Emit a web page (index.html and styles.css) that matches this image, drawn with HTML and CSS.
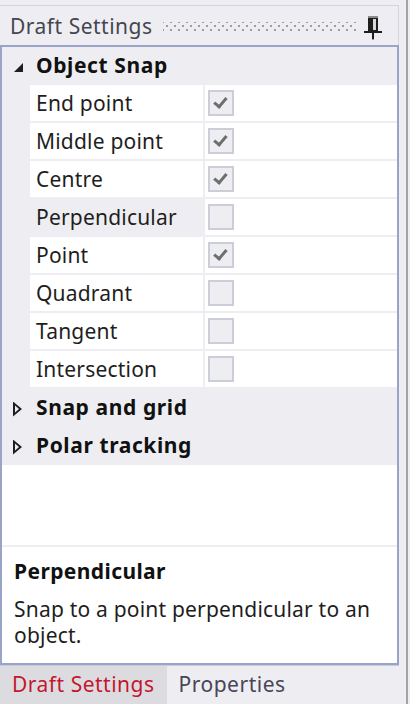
FILE: index.html
```html
<!DOCTYPE html>
<html>
<head>
<meta charset="utf-8">
<link rel="stylesheet" href="styles.css">
</head>
<body>
<div class="frame">
  <div class="panel">
    <div class="header">
      <span class="title">Draft Settings</span>
      <span class="grip"></span>
      <svg class="pin" width="18" height="24" viewBox="0 0 18 24">
        <rect x="4" y="0" width="10" height="2" fill="#8a8a8a"/>
        <rect x="4" y="2" width="10" height="13" fill="#1e1e1e"/>
        <rect x="9" y="3" width="3" height="11" fill="#d8d8dc"/>
        <rect x="0" y="15" width="18" height="2" fill="#1e1e1e"/>
        <rect x="8" y="17" width="2" height="6" fill="#1e1e1e"/>
        <rect x="8" y="23" width="2" height="1" fill="#9a9a9a"/>
      </svg>
    </div>
    <div class="content">
      <div class="grid">
        <div class="category">
          <span class="exp-open"></span>
          <span class="cat-label">Object Snap</span>
        </div>
        <div class="prop">
          <span class="indent"></span><span class="name">End point</span><span class="value"><span class="check on"></span></span>
        </div>
        <div class="prop">
          <span class="indent"></span><span class="name">Middle point</span><span class="value"><span class="check on"></span></span>
        </div>
        <div class="prop">
          <span class="indent"></span><span class="name">Centre</span><span class="value"><span class="check on"></span></span>
        </div>
        <div class="prop selected">
          <span class="indent"></span><span class="name">Perpendicular</span><span class="value"><span class="check"></span></span>
        </div>
        <div class="prop">
          <span class="indent"></span><span class="name">Point</span><span class="value"><span class="check on"></span></span>
        </div>
        <div class="prop">
          <span class="indent"></span><span class="name">Quadrant</span><span class="value"><span class="check"></span></span>
        </div>
        <div class="prop">
          <span class="indent"></span><span class="name">Tangent</span><span class="value"><span class="check"></span></span>
        </div>
        <div class="prop">
          <span class="indent"></span><span class="name">Intersection</span><span class="value"><span class="check"></span></span>
        </div>
        <div class="category">
          <span class="exp-closed"></span>
          <span class="cat-label">Snap and grid</span>
        </div>
        <div class="category">
          <span class="exp-closed"></span>
          <span class="cat-label">Polar tracking</span>
        </div>
        <div class="empty"></div>
      </div>
      <div class="desc">
        <div class="desc-title">Perpendicular</div>
        <div class="desc-text">Snap to a point perpendicular to an object.</div>
      </div>
    </div>
    <div class="tabs">
      <span class="tab active">Draft Settings</span>
      <span class="tab">Properties</span>
    </div>
  </div>
  <div class="edge"></div>
</div>
</body>
</html>
```

FILE: styles.css
```css
html, body {
  margin: 0;
  padding: 0;
  background: #eeeef2;
  width: 410px;
  height: 704px;
  overflow: hidden;
}
body {
  font-family: "Noto Sans", "Open Sans", "DejaVu Sans", sans-serif;
  font-size: 21px;
  letter-spacing: 0.2px;
  color: #1e1e1e;
}
.frame {
  display: flex;
  height: 704px;
}
.panel {
  width: 399px;
  display: flex;
  flex-direction: column;
  padding-top: 5px;
}
.edge {
  width: 2px;
  margin-left: 7px;
  background: #a3a3a6;
  height: 704px;
}
.header {
  height: 39px;
  border-top: 1px solid #d3d4de;
  border-right: 1px solid #d3d4de;
  display: flex;
  align-items: center;
  padding-left: 10px;
  padding-right: 16px;
}
.title {
  color: #454550;
  white-space: nowrap;
  line-height: 24px;
  letter-spacing: 0.5px;
}
.grip {
  flex: 1;
  height: 10px;
  margin: 0 8px 0 10px;
  background-image:
    radial-gradient(circle, #9c9ca2 0.9px, transparent 1.1px),
    radial-gradient(circle, #9c9ca2 0.9px, transparent 1.1px);
  background-size: 8px 8px, 8px 8px;
  background-position: 0 0, 4px 4px;
  align-self: center;
  margin-top: 2px;
}
.pin {
  display: block;
  margin-top: 4px;
}
.content {
  flex: 1;
  border: 2px solid #9aa3c8;
  display: flex;
  flex-direction: column;
  background: #ffffff;
}
.grid {
  display: flex;
  flex-direction: column;
  background: #eeeef2;
}
.category {
  height: 38px;
  display: flex;
  align-items: center;
  background: #eeeef2;
}
.exp-open {
  width: 0;
  height: 0;
  border-style: solid;
  border-width: 0 0 9px 9px;
  border-color: transparent transparent #1e1e1e transparent;
  margin-left: 12px;
  margin-right: 13px;
  margin-top: 2px;
}
.exp-closed {
  width: 9px;
  height: 15px;
  margin-left: 11px;
  margin-right: 14px;
  margin-top: 2px;
  background: #1e1e1e;
  clip-path: polygon(0 0, 100% 50%, 0 100%, 0 0, 2px 4px, 2px calc(100% - 4px), calc(100% - 3px) 50%, 2px 4px);
}
.cat-label {
  font-weight: bold;
  color: #111;
  line-height: 24px;
  letter-spacing: 0.6px;
  margin-bottom: 3px;
}
.prop {
  height: 36px;
  margin-bottom: 2px;
  display: flex;
}
.indent {
  width: 28px;
  background: #eeeef2;
}
.name {
  width: 167px;
  padding-left: 6px;
  background: #ffffff;
  display: flex;
  align-items: center;
  margin-right: 2px;
  white-space: nowrap;
}
.prop.selected .name {
  background: #eeeef2;
}
.value {
  flex: 1;
  background: #ffffff;
  display: flex;
  align-items: center;
  padding-left: 3px;
}
.check {
  width: 22px;
  height: 22px;
  border: 2px solid #cbcdd9;
  background: #eeeef2;
  position: relative;
}
.check.on::after {
  content: "";
  position: absolute;
  left: 5px;
  top: 3px;
  width: 10px;
  height: 5px;
  border-left: 3px solid #6e6e72;
  border-bottom: 3px solid #6e6e72;
  transform: translate(0, 3px) rotate(-50deg);
  transform-origin: 40% 60%;
}
.empty {
  height: 80px;
  background: #ffffff;
  border-bottom: 2px solid #eeeef2;
}
.desc {
  flex: 1;
  background: #ffffff;
  padding: 9px 12px 0 12px;
}
.desc-title {
  font-weight: bold;
  color: #111;
  line-height: 30px;
  letter-spacing: 0.4px;
}
.desc-text {
  line-height: 26px;
  margin-top: 10px;
  color: #1e1e1e;
}
.tabs {
  height: 38px;
  display: flex;
  border-top: 1px solid #c6cadc;
}
.tab {
  padding: 0 12px 0 12px;
  line-height: 36px;
  color: #4a4458;
  letter-spacing: 0.5px;
}
.tab.active {
  background: #dcdce0;
  color: #c4162e;
}
```
